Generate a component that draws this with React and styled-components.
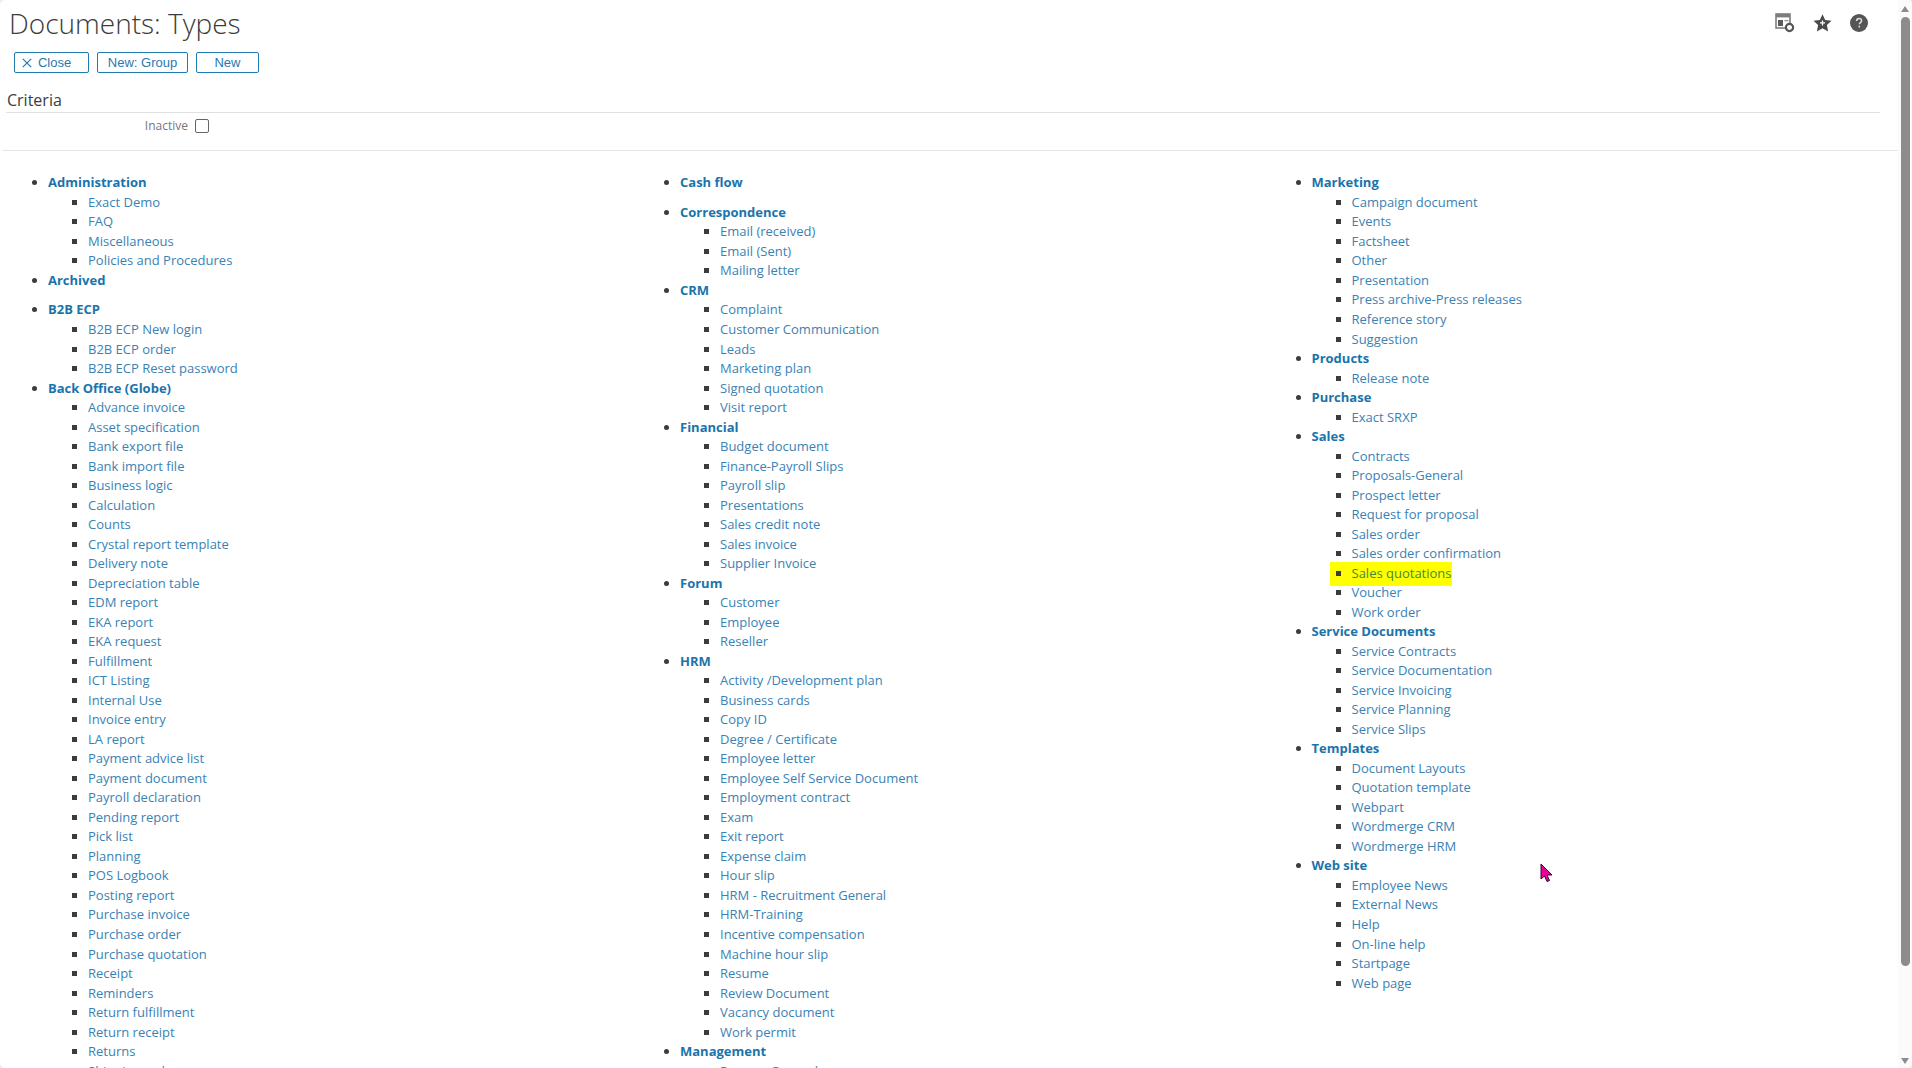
import React from 'react';
import styled, { createGlobalStyle } from 'styled-components';

const Global = createGlobalStyle`
  html, body { margin: 0; padding: 0; height: 100%; overflow: hidden; background: #ececec; }
  #root { height: 1068px; }
`;

const Frame = styled.div`
  position: relative;
  display: flex;
  width: 1912px;
  height: 1068px;
  overflow: hidden;
  background: #fff;
  border-radius: 5px;
  font-family: "Open Sans", sans-serif;
`;
const Main = styled.main`
  flex: 1;
  min-width: 0;
  overflow: hidden;
`;
const Header = styled.header`
  display: flex;
  justify-content: space-between;
  align-items: flex-start;
  padding: 4px 30px 0 9px;
`;
const Title = styled.h1`
  margin: 0;
  font-family: "Open Sans", sans-serif;
  font-weight: 300;
  font-size: 28px;
  line-height: 38px;
  color: #3c3c3c;
`;
const HeaderIcons = styled.div`
  display: flex;
  align-items: center;
  gap: 18px;
  padding-top: 9px;
`;
const Toolbar = styled.div`
  display: flex;
  gap: 8px;
  padding: 10px 0 0 14px;
`;
const Button = styled.button`
  display: flex;
  align-items: center;
  justify-content: center;
  gap: 6px;
  box-sizing: border-box;
  width: ${p => p.$w}px;
  height: 21px;
  padding: ${p => (p.$icon ? '0 10px 0 0' : '0')};
  background: #fff;
  border: 1px solid #1f7ab0;
  border-radius: 2px;
  color: #1f7ab0;
  font-family: "Liberation Sans", Arial, sans-serif;
  font-size: 13px;
`;
const Criteria = styled.section`
  margin: 16px 18px 0 6px;
  border-bottom: 1px solid #e0e0e0;
  padding: 0 0 1px 1px;
  font-size: 16px;
  line-height: 22px;
  color: #3c3c3c;
`;
const FilterRow = styled.label`
  display: flex;
  align-items: center;
  justify-content: flex-end;
  gap: 7px;
  width: 209px;
  height: 25px;
  font-size: 12px;
  color: #777;
`;
const Check = styled.span`
  box-sizing: border-box;
  width: 14px;
  height: 14px;
  border: 1px solid #666;
  border-radius: 2px;
`;
const Rule = styled.hr`
  margin: 12px 0 0 2px;
  border: 0;
  border-top: 1px solid #e6e6e6;
`;
const Columns = styled.div`
  display: grid;
  grid-template-columns: 632px 631.5px 1fr;
  padding: 22.4px 0 0 0;
`;
const GroupList = styled.ul`
  margin: 0;
  padding: 0 0 0 48px;
  list-style: disc;
  color: #3c3c3c;
`;
const Group = styled.li`
  margin-bottom: ${p => (p.$empty ? 10 : 0)}px;
  font-size: 13px;
  line-height: 19.52px;
`;
const GroupLink = styled.a`
  font-weight: 700;
  color: #1a74ab;
`;
const ItemList = styled.ul`
  margin: 0;
  padding: 0 0 0 40px;
  list-style: square;
`;
const Item = styled.li`
  font-size: 13px;
  line-height: 19.52px;
  position: relative;
  isolation: isolate;
  ${p => p.$hl && `
    &::before {
      content: "";
      position: absolute;
      z-index: -1;
      left: -22px;
      top: -2px;
      width: 122px;
      height: 24px;
      background: #ffff00;
    }
  `}
`;
const ItemLink = styled.a`
  color: ${p => (p.$hl ? '#3f8a3a' : '#3a82b4')};
`;
const Scrollbar = styled.aside`
  display: flex;
  flex-direction: column;
  align-items: center;
  flex: 0 0 14px;
  height: 100%;
  background: #fbfbfb;
`;
const Arrow = styled.span`
  width: 0;
  height: 0;
  margin: ${p => (p.$up ? '6px 0 4px' : '5px 0 4px')};
  border-left: 4.5px solid transparent;
  border-right: 4.5px solid transparent;
  ${p => (p.$up ? 'border-bottom: 6px solid #8c8c8c;' : 'border-top: 6px solid #8c8c8c;')}
`;
const Thumb = styled.div`
  width: 9px;
  height: 949px;
  margin-top: 1px;
  border-radius: 5px;
  background: #8c8c8c;
`;
const Spacer = styled.div`
  flex: 1;
`;
const Cursor = styled.svg`
  position: absolute;
  left: 1540px;
  top: 863px;
`;

const col1 = [
  ['Administration', ['Exact Demo', 'FAQ', 'Miscellaneous', 'Policies and Procedures']],
  ['Archived', []],
  ['B2B ECP', ['B2B ECP New login', 'B2B ECP order', 'B2B ECP Reset password']],
  ['Back Office (Globe)', ['Advance invoice', 'Asset specification', 'Bank export file', 'Bank import file', 'Business logic', 'Calculation', 'Counts', 'Crystal report template', 'Delivery note', 'Depreciation table', 'EDM report', 'EKA report', 'EKA request', 'Fulfillment', 'ICT Listing', 'Internal Use', 'Invoice entry', 'LA report', 'Payment advice list', 'Payment document', 'Payroll declaration', 'Pending report', 'Pick list', 'Planning', 'POS Logbook', 'Posting report', 'Purchase invoice', 'Purchase order', 'Purchase quotation', 'Receipt', 'Reminders', 'Return fulfillment', 'Return receipt', 'Returns', 'Shipping order']],
];
const col2 = [
  ['Cash flow', []],
  ['Correspondence', ['Email (received)', 'Email (Sent)', 'Mailing letter']],
  ['CRM', ['Complaint', 'Customer Communication', 'Leads', 'Marketing plan', 'Signed quotation', 'Visit report']],
  ['Financial', ['Budget document', 'Finance-Payroll Slips', 'Payroll slip', 'Presentations', 'Sales credit note', 'Sales invoice', 'Supplier Invoice']],
  ['Forum', ['Customer', 'Employee', 'Reseller']],
  ['HRM', ['Activity /Development plan', 'Business cards', 'Copy ID', 'Degree / Certificate', 'Employee letter', 'Employee Self Service Document', 'Employment contract', 'Exam', 'Exit report', 'Expense claim', 'Hour slip', 'HRM - Recruitment General', 'HRM-Training', 'Incentive compensation', 'Machine hour slip', 'Resume', 'Review Document', 'Vacancy document', 'Work permit']],
  ['Management', ['Process General']],
];
const col3 = [
  ['Marketing', ['Campaign document', 'Events', 'Factsheet', 'Other', 'Presentation', 'Press archive-Press releases', 'Reference story', 'Suggestion']],
  ['Products', ['Release note']],
  ['Purchase', ['Exact SRXP']],
  ['Sales', ['Contracts', 'Proposals-General', 'Prospect letter', 'Request for proposal', 'Sales order', 'Sales order confirmation', 'Sales quotations', 'Voucher', 'Work order']],
  ['Service Documents', ['Service Contracts', 'Service Documentation', 'Service Invoicing', 'Service Planning', 'Service Slips']],
  ['Templates', ['Document Layouts', 'Quotation template', 'Webpart', 'Wordmerge CRM', 'Wordmerge HRM']],
  ['Web site', ['Employee News', 'External News', 'Help', 'On-line help', 'Startpage', 'Web page']],
];

const Column = ({ groups }) => (
  <GroupList>
    {groups.map(([name, items]) => (
      <Group key={name} $empty={items.length === 0}>
        <GroupLink>{name}</GroupLink>
        {items.length > 0 && (
          <ItemList>
            {items.map(i => {
              const hl = i === 'Sales quotations';
              return (
                <Item key={i} $hl={hl}>
                  <ItemLink $hl={hl}>{i}</ItemLink>
                </Item>
              );
            })}
          </ItemList>
        )}
      </Group>
    ))}
  </GroupList>
);

const LayoutIcon = () => (
  <svg width="20" height="20" viewBox="0 0 20 20">
    <rect x="1" y="1" width="14" height="14" fill="none" stroke="#7d7d7d" strokeWidth="1.6" />
    <rect x="1" y="1" width="14" height="3.4" fill="#7d7d7d" />
    <rect x="3" y="7" width="5" height="6" fill="#5a5a5a" />
    <rect x="9.5" y="7" width="4" height="1.4" fill="#9a9a9a" />
    <circle cx="14.5" cy="14.5" r="3.6" fill="#fff" stroke="#555" strokeWidth="2.2" />
  </svg>
);
const StarIcon = () => (
  <svg width="19" height="18" viewBox="0 0 19 18">
    <path d="M9.5 .3l2.700 5.700 6.300.8-4.600 4.300 1.200 6.300-5.600-3.100-5.600 3.100 1.200-6.300L.5 6.800l6.300-.8z" fill="#4a4a4a" />
    <path d="M9.500 6.400v5M7 8.900h5" stroke="#fff" strokeWidth="1.300" />
  </svg>
);
const HelpIcon = () => (
  <svg width="18" height="18" viewBox="0 0 18 18">
    <circle cx="9" cy="9" r="9" fill="#555" />
    <path d="M6.600 7c0-1.500 1-2.400 2.500-2.400S11.600 5.400 11.600 6.800c0 1.700-2.300 1.800-2.300 3.500" fill="none" stroke="#ddd" strokeWidth="1.500" />
    <rect x="8.500" y="11.700" width="1.600" height="1.700" fill="#ddd" />
  </svg>
);
const CloseIcon = () => (
  <svg width="10" height="10" viewBox="0 0 10 10">
    <path d="M.8.8l8.400 8.400M9.200.8L.8 9.200" stroke="#1f7ab0" strokeWidth="1.200" />
  </svg>
);

export default function App() {
  return (
    <Frame>
      <Global />
      <Main>
        <Header>
          <Title>Documents: Types</Title>
          <HeaderIcons>
            <LayoutIcon />
            <StarIcon />
            <HelpIcon />
          </HeaderIcons>
        </Header>
        <Toolbar>
          <Button $w={75} $icon><CloseIcon />Close</Button>
          <Button $w={91}>New: Group</Button>
          <Button $w={63}>New</Button>
        </Toolbar>
        <Criteria>Criteria</Criteria>
        <FilterRow>Inactive<Check /></FilterRow>
        <Rule />
        <Columns>
          <Column groups={col1} />
          <Column groups={col2} />
          <Column groups={col3} />
        </Columns>
      </Main>
      <Scrollbar>
        <Arrow $up />
        <Thumb />
        <Spacer />
        <Arrow />
      </Scrollbar>
      <Cursor width="14" height="20" viewBox="0 0 14 20">
        <path d="M1 1v15l3.500-3 2.500 5.500 2.500-1-2.500-5.500H12z" fill="#e6009a" stroke="#3a0030" strokeWidth="1" />
      </Cursor>
    </Frame>
  );
}
